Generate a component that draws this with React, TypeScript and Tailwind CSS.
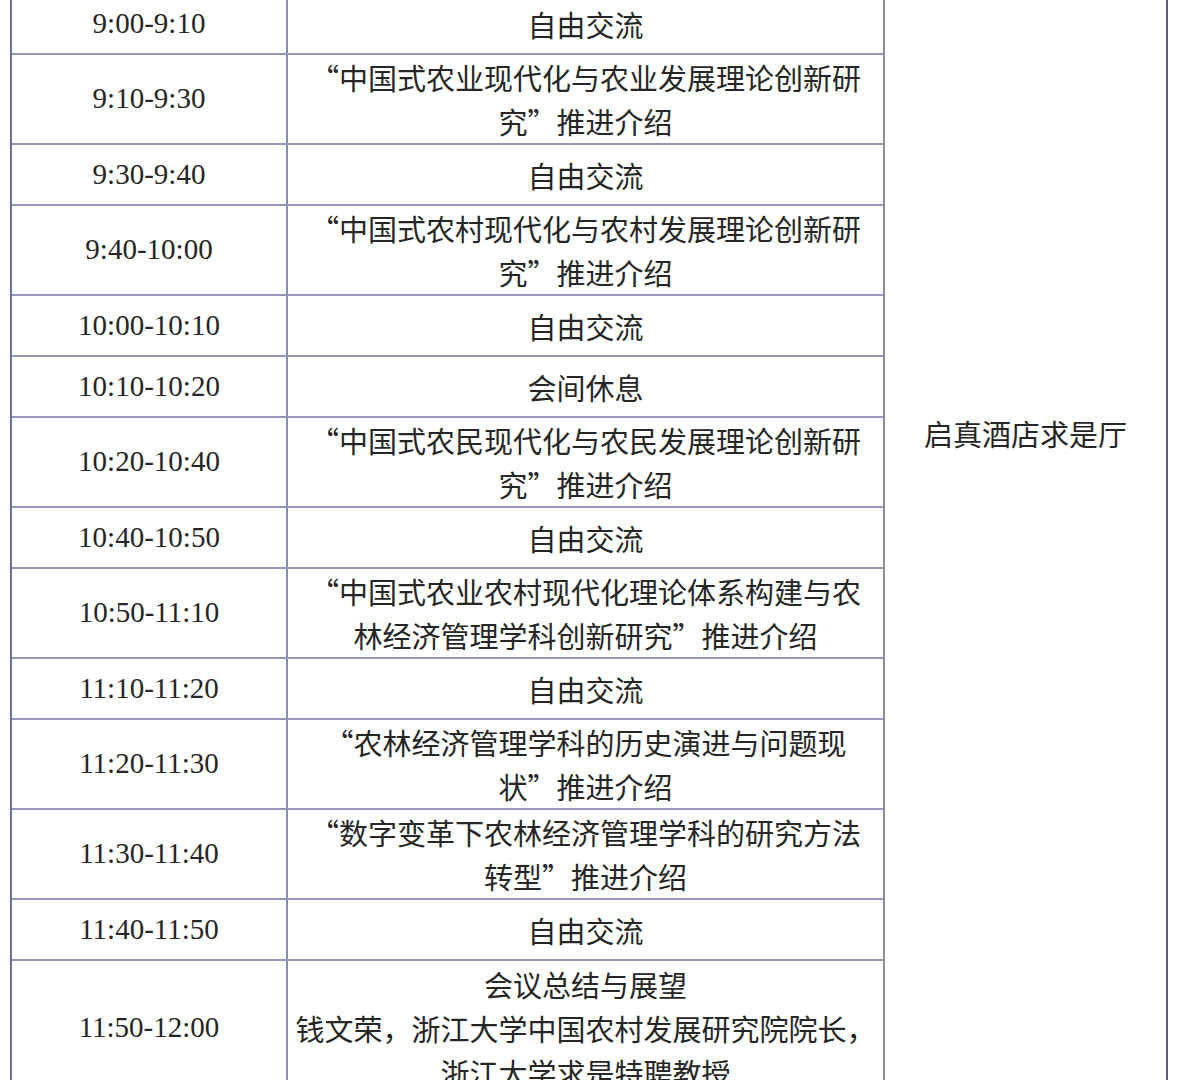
import React from 'react';

type Row = { time: string; lines: string[] };

const rows: Row[] = [
  { time: '9:00-9:10', lines: ['自由交流'] },
  { time: '9:10-9:30', lines: ['“中国式农业现代化与农业发展理论创新研', '究”推进介绍'] },
  { time: '9:30-9:40', lines: ['自由交流'] },
  { time: '9:40-10:00', lines: ['“中国式农村现代化与农村发展理论创新研', '究”推进介绍'] },
  { time: '10:00-10:10', lines: ['自由交流'] },
  { time: '10:10-10:20', lines: ['会间休息'] },
  { time: '10:20-10:40', lines: ['“中国式农民现代化与农民发展理论创新研', '究”推进介绍'] },
  { time: '10:40-10:50', lines: ['自由交流'] },
  { time: '10:50-11:10', lines: ['“中国式农业农村现代化理论体系构建与农', '林经济管理学科创新研究”推进介绍'] },
  { time: '11:10-11:20', lines: ['自由交流'] },
  { time: '11:20-11:30', lines: ['“农林经济管理学科的历史演进与问题现', '状”推进介绍'] },
  { time: '11:30-11:40', lines: ['“数字变革下农林经济管理学科的研究方法', '转型”推进介绍'] },
  { time: '11:40-11:50', lines: ['自由交流'] },
  {
    time: '11:50-12:00',
    lines: ['会议总结与展望', '钱文荣，浙江大学中国农村发展研究院院长，', '浙江大学求是特聘教授'],
  },
];

const serif = "font-['Liberation_Serif','Noto_Sans_CJK_SC',serif]";
const cjk = "font-['Noto_Sans_CJK_SC','Liberation_Serif',sans-serif]";

const rowHeight = (n: number) =>
  n === 1 ? 'h-[61px]' : n === 2 ? 'h-[90px]' : 'h-[136px]';

const App: React.FC = () => {
  return (
    <div className="w-[1183px] h-[1080px] overflow-hidden bg-white">
      <div className="flex mt-[-6px] ml-[10px] text-[#262626]">
        {/* Time + agenda columns */}
        <div className="flex flex-col w-[873px] border-l-[2px] border-[#6f7199]">
          {rows.map((row) => (
            <div
              key={row.time}
              className={`flex ${rowHeight(row.lines.length)} border-b-2 border-[#9597b8]`}
            >
              <div
                className={`w-[276px] flex items-center justify-center text-[29px] ${serif} border-r-[2px] border-[#8a8cb0]`}
              >
                {row.time}
              </div>
              <div
                className={`flex-1 flex flex-col items-center justify-center text-[29px] leading-[44px] whitespace-nowrap ${cjk}`}
              >
                {row.lines.map((l) => (
                  <span key={l}>{l}</span>
                ))}
              </div>
            </div>
          ))}
        </div>

        {/* Venue column */}
        <div className="w-[285px] flex justify-center border-l-[2px] border-r-[2px] border-l-[#8b8c9c] border-r-[#5c5d6e] pt-[417px]">
          <span className={`text-[29px] leading-[44px] ${cjk}`}>启真酒店求是厅</span>
        </div>
      </div>
    </div>
  );
};

export default App;
